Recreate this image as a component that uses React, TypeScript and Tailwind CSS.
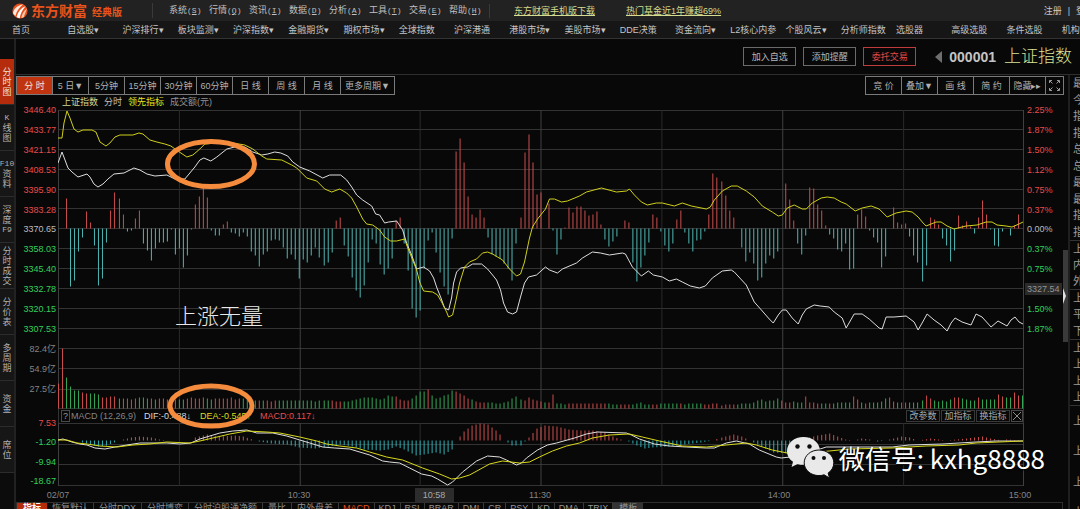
import React from "react";

const RED = "#cc4e4e";
const CYAN = "#4fb9b6";
const GREEN = "#35a857";

// minute bars of the lead indicator, positive is up
const leadBars = [
  0, 0, 30, -58, -52, -23, -9, 17, 6, -17, -57, -50, -14, 18, 36, 30, 14, -3, -2, 10, 18, -15, -22, -32,
  -20, -14, -14, -13, -1, -26, -20, -39, -27, -1, 24, 32, 41, 31, -2, -7, -7, 4, 7, -4, -5, -8, -4, -8,
  -23, -27, -38, -26, -23, -12, -11, -12, -19, -30, -26, -31, -50, -31, -34, -27, -19, -29, -37, -34, -24,
  8, 11, -17, -28, -49, -62, -69, -57, -34, -11, -15, -36, -46, -40, -30, 8, 11, -15, -42, -80, -89, -82,
  -40, -12, -4, -24, -44, -58, -66, -10, 77, 90, 66, 32, 14, 11, 19, 11, -9, -26, -28, -30, -35, -40, -52,
  -15, 11, 76, 94, 66, 34, 36, 0, 25, -2, -26, -11, 1, 21, 16, 22, 22, 18, 13, 14, 17, 4, -11, -18, -13,
  -8, 0, 8, 6, -34, -53, -39, -27, -14, 14, 11, -3, -17, -23, -15, 9, 18, -4, -15, -23, -12, -11, -3, 14,
  55, 51, 47, 33, 18, 11, 0, -19, -33, -24, -35, -52, -49, -35, -27, -30, -23, 0, 45, 29, 8, -15, -26, -7,
  41, 40, 24, 18, 3, -6, -10, -21, -23, -15, -41, -40, 14, 19, 12, -2, -9, -14, -39, -28, 0, 21, 6, 4, 5,
  -8, -27, -34, -53, -37, 11, 9, 4, -10, -17, -33, -22, 13, 3, 7, 2, -5, 11, 28, 14, -1, -17, -18, -3, 0,
  -7, 3, 14, 0,
];

// volume, positive is a rising minute and negative a falling one
const volumeBars = [
  25, 60, -31, -22, -18, -18, 16, 15, -15, -15, -14, 11, 11, 12, 12, -10, 10, 10, 9, 10, -11, -11, -10, 10,
  -9, 10, 10, 9, 9, 9, -9, -9, 10, 11, 10, 10, 11, -10, -9, 10, 10, 10, 10, 11, 9, 10, -10, -9, -9, -8, 8,
  -8, 8, 7, 8, -8, -8, -8, -8, -8, -8, -8, -8, -8, -7, -8, -8, -8, 8, 7, 7, -7, -7, -8, -9, -10, -11, -11,
  -11, -10, -9, -10, -13, -12, 12, 9, 8, 8, -10, -13, -17, -17, 19, -13, -10, -11, -13, -14, -18, 17, 15,
  13, 10, -9, 7, 6, 6, -6, -6, -5, -5, -6, -7, -10, -12, -9, 8, 11, 9, 8, 7, -6, 6, 14, -5, -5, -4, 5, 5,
  5, 5, 5, 5, 5, 5, 5, 5, -5, -4, -4, 4, 4, 4, -4, -5, -6, -4, -4, 4, 4, -5, -5, -5, -5, -5, 5, -4, -5,
  -5, -5, -5, 4, 4, 5, 5, 3, 4, 4, 4, -4, -5, -5, -5, -6, -8, -9, -7, -8, -8, -10, 8, 6, 6, -7, -6, -6, 12,
  6, 6, 5, -5, -5, 5, -5, -6, -6, -6, -6, 12, 9, -6, 5, -6, -6, -6, -7, -10, 11, 7, -6, 6, 6, -6, -6, -6,
  -8, 13, 10, -8, -7, -8, -7, -9, 11, 11, -10, -9, -8, -8, 11, -9, -9, -9, -9, 14, 12, -11, -11, 16, 13,
  -13, -18,
];

// [minute, height] stops, the bars between them are interpolated
const macdStops: [number, number][] = [
  [0, 0], [5, 0], [6, -2], [10, -6], [12, -5], [14, -2], [15, 0], [18, 3], [20, 4], [23, 3], [25, 1], [27, 0],
  [33, 0], [34, 3], [37, 6], [40, 4], [44, 5], [46, 4], [49, 0], [50, -1], [53, -3], [57, -4], [60, -7],
  [64, -8], [67, -6], [70, -4], [73, -6], [76, -9], [80, -10], [82, -9], [84, -6], [86, -9], [89, -15],
  [91, -14], [94, -12], [96, -14], [98, -9], [99, 0], [100, 4], [101, 9], [103, 15], [105, 17], [107, 16],
  [109, 10], [110, 6], [111, 0], [112, -2], [113, -5], [115, -5], [116, -1], [117, 3], [119, 12], [121, 15],
  [124, 14], [127, 11], [130, 10], [133, 10], [136, 8], [138, 4], [140, 1], [142, -1], [144, -5], [146, -8],
  [148, -7], [152, -6], [156, -4], [160, -2], [163, 0], [165, 3], [168, 6], [170, 4], [172, 0], [174, -4],
  [178, -12], [182, -13], [184, -8], [186, 0], [187, 3], [189, 5], [192, 7], [194, 4], [196, 1], [198, 0],
  [200, 2], [202, 1], [204, -1], [206, 0], [208, 2], [210, 4], [212, 3], [214, 0], [217, 2], [219, 1],
  [221, 0], [226, 2], [228, 3], [230, 4], [232, 2], [235, 0], [236, 1], [240, 0],
];

const indexLine =
  "58,163 62,152 65,160 68,168 72,172 78,177 87,174 90,177 94,184 98,187 103,184 108,179 114,174 124,173 134,168 140,170 147,174 155,176 167,175 175,179 185,179 190,173 195,167 200,160 204,158 211,161 217,157 227,149 235,147 245,147 253,152 262,155 268,154 275,152 281,153 288,156 293,162 300,167 310,171 323,178 330,175 341,175 347,180 352,187 357,195 363,200 372,206 376,214 380,215 385,223 389,222 397,221 403,230 407,243 412,255 417,269 424,267 430,271 434,278 437,287 441,297 445,308 449,310 452,298 454,283 457,272 461,268 468,267 473,264 482,264 488,269 493,275 497,280 501,290 504,303 508,312 513,314 517,312 521,297 525,283 529,277 537,275 546,267 550,270 558,273 563,269 577,263 583,258 593,252 601,253 610,255 623,253 626,254 633,267 642,276 649,271 654,275 663,277 670,281 677,279 683,282 691,286 700,288 706,286 713,278 723,271 732,270 735,272 747,285 755,302 763,311 770,319 774,323 779,315 783,310 787,310 793,318 799,324 803,315 807,309 815,305 821,306 830,307 835,312 843,318 847,328 855,314 863,314 870,319 880,328 883,329 887,317 895,317 907,316 915,322 919,330 923,323 928,314 935,320 942,325 948,331 952,323 956,318 963,322 972,325 977,314 983,317 992,327 999,321 1008,326 1012,320 1016,317 1020,322 1024,324";
const leadLine =
  "58,138 62,138 64,123 67,111 70,118 74,129 78,132 83,130 92,130 96,132 100,142 106,146 110,143 115,137 120,135 133,135 139,133 143,134 150,140 157,142 165,144 171,146 178,151 187,157 193,155 200,149 205,144 217,143 233,143 245,145 253,149 262,156 267,159 282,160 292,165 297,168 307,178 317,181 325,189 332,192 340,189 347,193 352,198 357,207 363,219 367,224 373,225 380,230 385,237 391,241 397,241 405,239 407,245 417,270 420,282 424,291 433,292 438,295 442,302 447,312 449,317 453,315 456,302 460,283 465,267 470,262 477,259 483,253 488,252 493,254 503,260 510,269 517,276 521,274 525,262 530,238 533,227 538,219 546,209 550,199 555,199 562,202 568,201 580,196 587,192 602,188 617,192 627,191 630,189 635,195 642,202 648,205 657,203 663,203 675,206 683,203 692,206 707,209 711,207 715,200 723,191 732,186 738,186 747,191 755,197 763,206 773,212 779,216 783,215 788,208 795,205 803,209 807,209 813,203 822,198 828,197 835,198 842,202 847,204 856,211 863,208 872,206 880,209 888,217 897,213 907,211 913,212 919,217 924,223 927,226 937,222 942,222 948,226 955,229 967,226 978,225 987,222 993,222 998,225 1007,226 1013,227 1020,224 1024,222";
const difLine =
  "58,440 63,439 72,442 80,444 87,445 95,448 105,449 115,447 127,445 140,443 167,443 180,444 191,443 200,439 210,436 220,433 233,431 247,430 257,433 273,433 287,436 300,440 310,443 323,447 335,448 350,449 370,455 383,461 390,462 400,463 410,468 422,474 432,476 438,479 448,485 453,482 463,472 477,461 488,456 500,457 507,460 517,465 522,463 527,458 538,450 548,445 557,443 575,438 587,434 598,432 627,433 632,435 640,439 655,444 670,446 687,447 707,448 715,448 727,443 737,441 750,444 760,450 777,457 782,458 800,456 815,451 827,447 850,447 893,447 910,445 943,444 977,442 997,441 1024,441";
const deaLine =
  "58,440 67,440 77,443 87,444 100,446 117,447 133,445 150,444 167,442 190,443 200,441 213,438 230,434 247,431 267,432 280,433 300,437 317,441 327,444 340,446 357,448 370,452 387,457 403,460 423,468 440,474 452,479 460,478 470,475 490,464 503,461 520,463 530,462 540,457 553,451 567,446 580,443 593,438 610,435 630,434 643,437 660,441 683,446 707,447 727,445 747,443 757,445 773,450 793,454 812,453 830,451 850,449 893,448 927,446 960,445 977,443 1000,442 1024,441";

const menus = [
  ["系统", "S"], ["行情", "Q"], ["资讯", "I"], ["数据", "D"],
  ["分析", "A"], ["工具", "T"], ["交易", "E"], ["帮助", "H"],
];
const navItems = [
  "首页", "自选股▾", "沪深排行▾", "板块监测▾", "沪深指数▾", "金融期货▾", "期权市场▾", "全球指数", "沪深港通",
  "港股市场▾", "美股市场▾", "DDE决策", "资金流向▾", "L2核心内参", "个股风云▾", "分析师指数", "选股器",
  "高级选股", "条件选股", "机构",
];
const sideTabs = [
  ["分", "时", "图"], ["K", "线", "图"], ["F10", "资", "料"], ["深", "度", "F9"], ["分", "时", "成", "交"],
  ["分", "价", "表"], ["多", "周", "期"], ["资", "金"], ["席", "位"],
];
const periods = ["分 时", "5 日▼", "5分钟", "15分钟", "30分钟", "60分钟", "日 线", "周 线", "月 线"];
const tools = ["竞 价", "叠加▼", "画 线", "简 约", "隐藏▸▸"];
const prices = [
  "3446.40", "3433.77", "3421.15", "3408.53", "3395.90", "3383.28",
  "3370.65", "3358.03", "3345.40", "3332.78", "3320.15", "3307.53",
];
const percents = [
  "2.25%", "1.87%", "1.50%", "1.12%", "0.75%", "0.37%",
  "0.00%", "0.37%", "0.75%", "3327.54", "1.50%", "1.87%",
];
const times = [
  { label: "02/07", gap: 0 },
  { label: "10:30", gap: 241 },
  { label: "10:58", gap: 135, current: true },
  { label: "11:30", gap: 106 },
  { label: "14:00", gap: 239 },
  { label: "15:00", gap: 241 },
];
const formulaTabs = ["恢复默认", "分时DDX", "分时博弈", "分时沪股通净额", "量比", "内外盘差"];
const indicatorTabs = ["MACD", "KDJ", "RSI", "BRAR", "DMI", "CR", "PSY", "KD", "DMA", "TRIX"];
const quoteGroups = [
  { rows: ["最", "今", "指", "指", "总", "总", "最", "最", "指", "指"], height: "h-[166px]" },
  { rows: ["上", "内", "外"], height: "h-[49px]" },
  { rows: ["上", "平", "下"], height: "h-[50px]" },
  { rows: ["上", "上", "上", "上"], height: "h-[66px]" },
  { rows: ["上", "上", "上", "上"], height: "h-[122px]" },
];

const barX = (i: number) => Math.round(58.2 + i * 4.02) + 0.5;

const macdBars = Array.from({ length: 241 }, (_, i) => {
  const next = Math.max(1, macdStops.findIndex(([m]) => m >= i));
  const [m0, h0] = macdStops[next - 1];
  const [m1, h1] = macdStops[next];
  return h0 + ((h1 - h0) * (i - m0)) / (m1 - m0);
});

interface BarsProps {
  data: number[];
  base: number;
  up: string;
  down: string;
  stacked?: boolean;
}

function Bars({ data, base, up, down, stacked }: BarsProps) {
  return (
    <g>
      {data.map((h, i) =>
        h === 0 ? null : (
          <line
            key={i}
            x1={barX(i)}
            x2={barX(i)}
            y1={base}
            y2={base - (stacked ? Math.abs(h) : h)}
            stroke={h > 0 ? up : down}
          />
        )
      )}
    </g>
  );
}

function Grid({ rows, top, bottom }: { rows: number[]; top: number; bottom: number }) {
  return (
    <g stroke="#333333">
      {rows.map((y) => (
        <line key={y} x1="58" x2="1025" y1={y + 0.5} y2={y + 0.5} />
      ))}
      {[58, 179, 300, 420, 541, 662, 783, 904, 1024].map((x, i) => (
        <line
          key={x}
          x1={x + 0.5}
          x2={x + 0.5}
          y1={top}
          y2={bottom}
          stroke={i % 2 === 0 ? "#404040" : "#2a2a2a"}
        />
      ))}
    </g>
  );
}

function PriceChart() {
  return (
    <svg className="block w-full h-[300px]" viewBox="58 109 967 300" preserveAspectRatio="none" fill="none">
      <Grid
        rows={[110, 129, 149, 169, 189, 208, 228, 248, 268, 288, 308, 328, 348, 368, 389, 408]}
        top={110}
        bottom={409}
      />
      <Bars data={leadBars} base={228.5} up={RED} down={CYAN} />
      <Bars data={volumeBars} base={408.5} up={RED} down={GREEN} stacked />
      <polyline points={indexLine} stroke="#dedede" />
      <polyline points={leadLine} stroke="#d0d01c" />
    </svg>
  );
}

function MacdChart() {
  return (
    <svg className="block w-full h-[63px]" viewBox="58 423 967 63" preserveAspectRatio="none" fill="none">
      <Grid rows={[423, 444, 464, 485]} top={423} bottom={486} />
      <Bars data={macdBars} base={440.5} up={RED} down="#2fb0b5" />
      <polyline points={difLine} stroke="#dedede" />
      <polyline points={deaLine} stroke="#d8d81c" />
    </svg>
  );
}

function Header() {
  return (
    <header className="overflow-hidden">
      <div className="flex h-[21px] items-center bg-[#222222] pl-3">
        <svg className="mr-[3px] h-4 w-4 shrink-0" viewBox="0 0 16 16">
          <circle cx="8" cy="8" r="7.6" fill="#e5501c" />
          <path d="M1 10C2 5 6 2 11 1.4 8 4 5 7 3.4 13 2.200 12 1.300 11 1 10Z" fill="#ffe9dc" />
          <path d="M4.500 14C6 8.500 9 5 13.500 3.300 10.500 7 8.500 10.500 7.700 15.300 6.500 15.200 5.500 14.700 4.500 14Z" fill="#fff" />
          <path d="M9.300 15C10 11 11.500 8 15 5.500 13.600 9 12.500 11.500 12 14 11 14.700 10 15 9.300 15Z" fill="#ffc7a8" />
        </svg>
        <h1 className="flex shrink-0 items-baseline whitespace-nowrap font-bold text-[#e8531b]">
          <span className="text-[14px] leading-5">东方财富</span>
          <span className="ml-[5px] text-[10px]">经典版</span>
        </h1>
        <nav className="ml-[30px] flex shrink-0 border-l border-[#3a3a3a] pl-4">
          {menus.map(([name, key]) => (
            <button key={key} className="w-10 whitespace-nowrap text-left text-[#c0c0c0]">
              {name}
              <span className="font-[Liberation_Mono] text-[8px]">
                (<u>{key}</u>)
              </span>
            </button>
          ))}
        </nav>
        <div className="flex shrink-0 gap-[31px] border-l border-[#3a3a3a] pl-6 whitespace-nowrap text-[#d6dc90] underline">
          <a href="#app">东方财富手机版下载</a>
          <a href="#fund">热门基金近1年赚超69%</a>
        </div>
        <div className="-mr-[5px] ml-auto flex shrink-0 gap-[6px] text-[#c8c8c8]">
          <a href="#register">注册</a>
          <span>|</span>
          <a href="#login">登</a>
        </div>
      </div>
      <nav className="-mr-[37px] flex h-[18px] items-center border-b border-[#333333] bg-[#161616] pl-3">
        {navItems.map((item) => (
          <a key={item} href="#nav" className="min-w-0 flex-1 whitespace-nowrap text-[#c4c4c4]">
            {item}
          </a>
        ))}
      </nav>
    </header>
  );
}

function Sidebar() {
  return (
    <aside className="flex w-4 shrink-0 flex-col border-r-2 border-[#222222] bg-[#0c0c0c] pt-5 text-[#b0b0b0]">
      {sideTabs.map((tab, i) => (
        <button
          key={i}
          className={
            "flex h-[46px] flex-col items-center justify-center leading-[10px] border-b border-[#2c2c2c] " +
            (i === 0 ? "bg-[#b52c0c] text-[#f0e0d8]" : "bg-[#161616]")
          }
        >
          {tab.map((ch, j) => (
            <span key={j} className={ch.length > 1 || ch === "K" ? "font-[Liberation_Mono] text-[8px]" : ""}>
              {ch}
            </span>
          ))}
        </button>
      ))}
    </aside>
  );
}

function InfoBar() {
  return (
    <div className="flex h-9 shrink-0 items-center justify-end border-b border-[#2e2e2e] pr-2">
      <div className="flex gap-[7px]">
        <button className="h-[19px] w-[53px] border border-[#6a6a6a] text-[#b8b8b8]">加入自选</button>
        <button className="h-[19px] w-[53px] border border-[#6a6a6a] text-[#b8b8b8]">添加提醒</button>
        <button className="h-[19px] w-[53px] border border-[#c03c3c] text-[#e04848]">委托交易</button>
      </div>
      <svg className="ml-[19px] h-3 w-[7px]" viewBox="0 0 7 12">
        <path d="M7 0V12L0 6Z" fill="#6e6e6e" />
      </svg>
      <span className="ml-[7px] text-[14px] font-bold text-[#c4c4c4]">000001</span>
      <span className="ml-2 text-[17px] font-light text-[#dce096]">上证指数</span>
    </div>
  );
}

function Toolbar() {
  return (
    <div className="mt-px flex h-[19px] shrink-0 justify-between pr-1">
      <div className="flex border border-[#7a7a7a] text-[#b0b0b0]">
        {periods.map((p, i) => (
          <button
            key={p}
            className={
              "w-9 whitespace-nowrap border-r border-[#7a7a7a] " + (i === 0 ? "bg-[#c0340f] text-[#f4e6dc]" : "")
            }
          >
            {p}
          </button>
        ))}
        <button className="w-[53px] whitespace-nowrap">更多周期▼</button>
      </div>
      <div className="flex border border-[#7a7a7a] text-[#b0b0b0]">
        {tools.map((t) => (
          <button key={t} className="w-9 whitespace-nowrap border-r border-[#7a7a7a]">
            {t}
          </button>
        ))}
        <button className="flex w-[17px] items-center justify-center" aria-label="全屏">
          <svg className="h-[11px] w-[11px]" viewBox="0 0 11 11" fill="none" stroke="#9a9a9a">
            <path d="M.5 3V.5H3M1 1 3.500 3.500M8 .5H10.500V3M10 1 7.500 3.500M.5 8V10.500H3M1 10 3.500 7.500M10.500 8V10.500H8M10 10 7.500 7.500" />
          </svg>
        </button>
      </div>
    </div>
  );
}

function LeftAxis() {
  return (
    <div className="w-[42px] shrink-0 pr-[2px] pt-[9px] text-right leading-3">
      <div className="flex h-[231px] flex-col justify-between">
        {prices.map((p, i) => (
          <span key={p} className={i < 6 ? "text-[#e64c4c]" : i === 6 ? "text-[#bcbcbc]" : "text-[#32d05c]"}>
            {p}
          </span>
        ))}
      </div>
      <div className="mt-2 flex h-[52px] flex-col justify-between text-[#848484]">
        <span>82.4亿</span>
        <span>54.9亿</span>
        <span>27.5亿</span>
      </div>
      <div className="mt-[22px] flex h-[70px] flex-col justify-between text-[#32d05c]">
        <span className="text-[#e64c4c]">7.53</span>
        <span>-1.20</span>
        <span>-9.94</span>
        <span>-18.67</span>
      </div>
    </div>
  );
}

function RightAxis() {
  return (
    <div className="flex w-[39px] shrink-0 flex-col pt-[9px] leading-3">
      <div className="flex h-[231px] flex-col items-start justify-between">
        {percents.map((p, i) => (
          <span
            key={i}
            className={
              i < 6
                ? "pl-[3px] text-[#e64c4c]"
                : i === 6
                ? "pl-[3px] text-[#bcbcbc]"
                : i === 9
                ? "ml-px bg-[#2a2a2a] px-[2px] text-[#949494]"
                : "pl-[3px] text-[#32d05c]"
            }
          >
            {p}
          </span>
        ))}
      </div>
    </div>
  );
}

function MacdHeader() {
  return (
    <div className="flex h-[14px] items-center justify-between border-x border-[#333333] pl-[2px] leading-3">
      <div className="flex whitespace-nowrap">
        <button className="h-3 w-[9px] border border-[#4a4a4a] leading-[10px] text-[#9a9a9a]">?</button>
        <span className="ml-px text-[#848484]">MACD (12,26,9)</span>
        <span className="ml-2 text-[#d8d8d8]">DIF:-0.488↓</span>
        <span className="ml-[9px] text-[#dcdc1e]">DEA:-0.545↑</span>
        <span className="ml-[9px] text-[#e64c4c]">MACD:0.117↓</span>
      </div>
      <div className="flex h-3 gap-px text-[#a8a8a8]">
        <button className="w-[34px] border border-[#383838] leading-[10px]">改参数</button>
        <button className="w-[34px] border border-[#383838] leading-[10px]">加指标</button>
        <button className="w-[34px] border border-[#383838] leading-[10px]">换指标</button>
        <button className="flex w-3 items-center justify-center border border-[#484848]" aria-label="关闭">
          <svg className="h-2 w-2" viewBox="0 0 8 8" stroke="#8c8c8c">
            <path d="M0 0 8 8M8 0 0 8" />
          </svg>
        </button>
      </div>
    </div>
  );
}

function TimeAxis() {
  return (
    <div className="ml-[42px] mr-12 flex h-[15px] shrink-0 items-center text-[#848484]">
      {times.map((t) => (
        <React.Fragment key={t.label}>
          <i className="basis-0" style={{ flexGrow: t.gap }} />
          <span className="flex w-0 justify-center">
            <span className={t.current ? "w-[39px] shrink-0 bg-[#2c2c2c] text-center leading-[14px] text-[#a8a8a8]" : "shrink-0"}>
              {t.label}
            </span>
          </span>
        </React.Fragment>
      ))}
    </div>
  );
}

function Annotations() {
  return (
    <>
      <svg
        className="pointer-events-none absolute left-[106px] top-[40px] h-[300px] w-[100px]"
        viewBox="164 135 100 300"
        fill="none"
        stroke="#f58b3d"
        strokeWidth="5"
      >
        <ellipse cx="211" cy="164" rx="43.500" ry="22.500" />
        <ellipse cx="211" cy="406" rx="41" ry="20" />
      </svg>
      <p className="absolute left-[117px] top-[210px] whitespace-nowrap text-[22px] font-light leading-6 text-[#e8e8e8]">
        上涨无量
      </p>
      <div className="absolute -right-[21px] top-[342px] flex items-center gap-[5px] whitespace-nowrap">
        <svg className="h-[42px] w-[47px]" viewBox="0 0 47 42">
          <path
            d="M16.500 0C7.200 0 0 6.200 0 14c0 4.500 2.300 8.300 6 10.800L4.600 30l5.900-3.100c1.900.6 3.900.9 6 .9 9.200 0 16.500-6.100 16.500-13.900S25.700 0 16.500 0Z"
            fill="#e9e9e9"
          />
          <circle cx="10.500" cy="9.500" r="2.200" fill="#0c0c0c" />
          <circle cx="22.500" cy="9.500" r="2.200" fill="#0c0c0c" />
          <path
            d="M32 13c-8.200 0-14.800 5.600-14.800 12.800S23.800 38.600 32 38.600c1.800 0 3.500-.3 5.100-.8L42.500 41l-1.400-4.900c3.500-2.300 5.700-6 5.700-10.300C46.800 18.600 40.200 13 32 13Z"
            fill="#e9e9e9"
            stroke="#0c0c0c"
          />
          <circle cx="26.500" cy="21" r="2" fill="#0c0c0c" />
          <circle cx="37" cy="21" r="2" fill="#0c0c0c" />
        </svg>
        <span className="font-['Noto_Sans_CJK_SC',sans-serif] text-[26px] leading-9 text-white [text-shadow:0_1px_2px_#000]">
          微信号: kxhg8888
        </span>
      </div>
    </>
  );
}

function IndicatorTabs() {
  return (
    <div className="mr-[5px] flex h-4 shrink-0 border border-[#2e2e2e] leading-[11px] text-[#949494]">
      <button className="flex w-[30px] shrink-0 justify-center bg-[#b52c0c] font-bold text-white">指标</button>
      {formulaTabs.map((name) => (
        <button key={name} className="flex shrink-0 border-r border-[#3a3a3a] px-[5px]">
          {name}
        </button>
      ))}
      {indicatorTabs.map((name) => (
        <button
          key={name}
          className={"flex shrink-0 border-r border-[#3a3a3a] px-1 " + (name === "MACD" ? "text-[#e0501e]" : "")}
        >
          {name}
        </button>
      ))}
      <button className="flex shrink-0 bg-[#333333] px-[6px]">模板</button>
    </div>
  );
}

function QuotePanel() {
  return (
    <aside className="w-3 shrink-0 overflow-hidden border-l-2 border-[#1f1f1f] text-[11px] text-[#9a9a9a]">
      {quoteGroups.map((g, i) => (
        <div key={i} className={"flex flex-col justify-around border-b border-[#333333] pl-[3px] leading-3 " + g.height}>
          {g.rows.map((r, j) => (
            <span key={j} className="whitespace-nowrap">{r}</span>
          ))}
        </div>
      ))}
    </aside>
  );
}

export default function App() {
  return (
    <div className="flex h-screen flex-col overflow-hidden bg-[#080808] font-['Liberation_Sans','Noto_Sans_CJK_SC',sans-serif] text-[9px] leading-[14px]">
      <Header />
      <div className="flex min-h-0 flex-1">
        <Sidebar />
        <div className="flex min-w-0 flex-1 flex-col">
          <InfoBar />
          <div className="flex min-h-0 flex-1">
            <main className="flex min-w-0 flex-1 flex-col">
              <Toolbar />
              <div className="flex shrink-0">
                <LeftAxis />
                <div className="relative min-w-0 flex-1">
                  <div className="flex h-[14px] gap-[6px] pl-1">
                    <span className="text-[#d2d691]">上证指数</span>
                    <span className="text-[#c0c0c0]">分时</span>
                    <span className="text-[#e6e61e]">领先指标</span>
                    <span className="text-[#949494]">成交额(元)</span>
                  </div>
                  <PriceChart />
                  <MacdHeader />
                  <MacdChart />
                  <Annotations />
                </div>
                <RightAxis />
                <div className="flex w-[5px] flex-col pt-[155px]">
                  <button className="flex h-[92px] items-center bg-[#3a3a3a]" aria-label="展开">
                    <svg className="h-4 w-[3px]" viewBox="0 0 3 16">
                      <path d="M0 0 3 8 0 16Z" fill="#e0e0e0" />
                    </svg>
                  </button>
                </div>
              </div>
              <TimeAxis />
              <IndicatorTabs />
            </main>
            <QuotePanel />
          </div>
        </div>
      </div>
    </div>
  );
}
